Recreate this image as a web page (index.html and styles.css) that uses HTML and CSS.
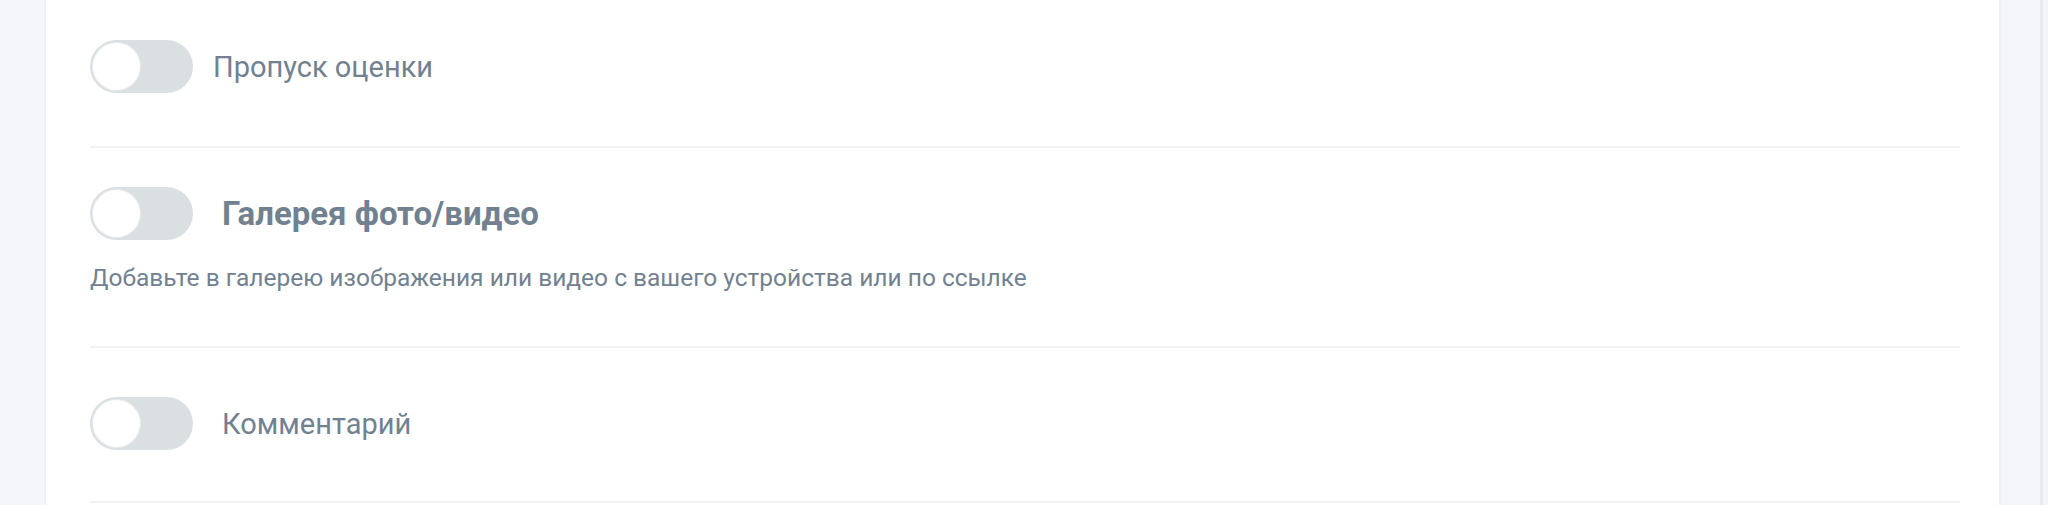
FILE: index.html
```html
<!DOCTYPE html>
<html lang="ru">
<head>
<meta charset="utf-8">
<title>Настройки</title>
<link rel="stylesheet" href="styles.css">
</head>
<body>
<div class="page">
  <main class="card">
    <section class="row row-first">
      <div class="line">
        <span class="toggle"><span class="knob"></span></span>
        <span class="label">Пропуск оценки</span>
      </div>
    </section>
    <section class="row row-second">
      <div class="line">
        <span class="toggle"><span class="knob"></span></span>
        <span class="label label-wide label-bold">Галерея фото/видео</span>
      </div>
      <p class="desc">Добавьте в галерею изображения или видео с вашего устройства или по ссылке</p>
    </section>
    <section class="row row-third">
      <div class="line">
        <span class="toggle"><span class="knob"></span></span>
        <span class="label label-wide">Комментарий</span>
      </div>
    </section>
  </main>
  <div class="rail"></div>
</div>
</body>
</html>
```

FILE: styles.css
```css
html, body {
  margin: 0;
  padding: 0;
  height: 100%;
  background: #f4f5f9;
  font-family: Roboto, "Noto Sans", "Liberation Sans", sans-serif;
  overflow: hidden;
}

.page {
  display: flex;
  height: 505px;
  padding-left: 46px;
}

.card {
  width: 1954px;
  flex: none;
  background: #ffffff;
  box-shadow: 0 0 3px rgba(40, 50, 80, 0.07);
  border-right: 1px solid #eef0f3;
  box-sizing: border-box;
  padding: 0 39px 0 44px;
}

.rail {
  margin-left: 40px;
  width: 3px;
  background: #e9ebef;
}

.row {
  border-bottom: 2px solid #f0f1f4;
}

.row-first {
  padding: 40px 0 53px;
}

.row-second {
  padding: 39px 0 52px;
}

.row-third {
  padding: 49px 0 51px;
}

.line {
  display: flex;
  align-items: center;
  gap: 20px;
}

.toggle {
  flex: none;
  width: 103px;
  height: 53px;
  border-radius: 27px;
  background: #dadfe2;
  box-sizing: border-box;
  padding: 3px;
  display: flex;
  align-items: center;
}

.knob {
  width: 47px;
  height: 47px;
  border-radius: 50%;
  background: #ffffff;
  box-shadow: 0 0 0 1px #e8ebed;
}

.label {
  font-size: 29px;
  color: #728190;
  line-height: 34px;
}

.label-wide {
  margin-left: 9px;
}

.label-bold {
  font-size: 33px;
  font-weight: 700;
  line-height: 38px;
}

.desc {
  margin: 22px 0 0;
  font-size: 24.5px;
  line-height: 32px;
  color: #728190;
}
```
